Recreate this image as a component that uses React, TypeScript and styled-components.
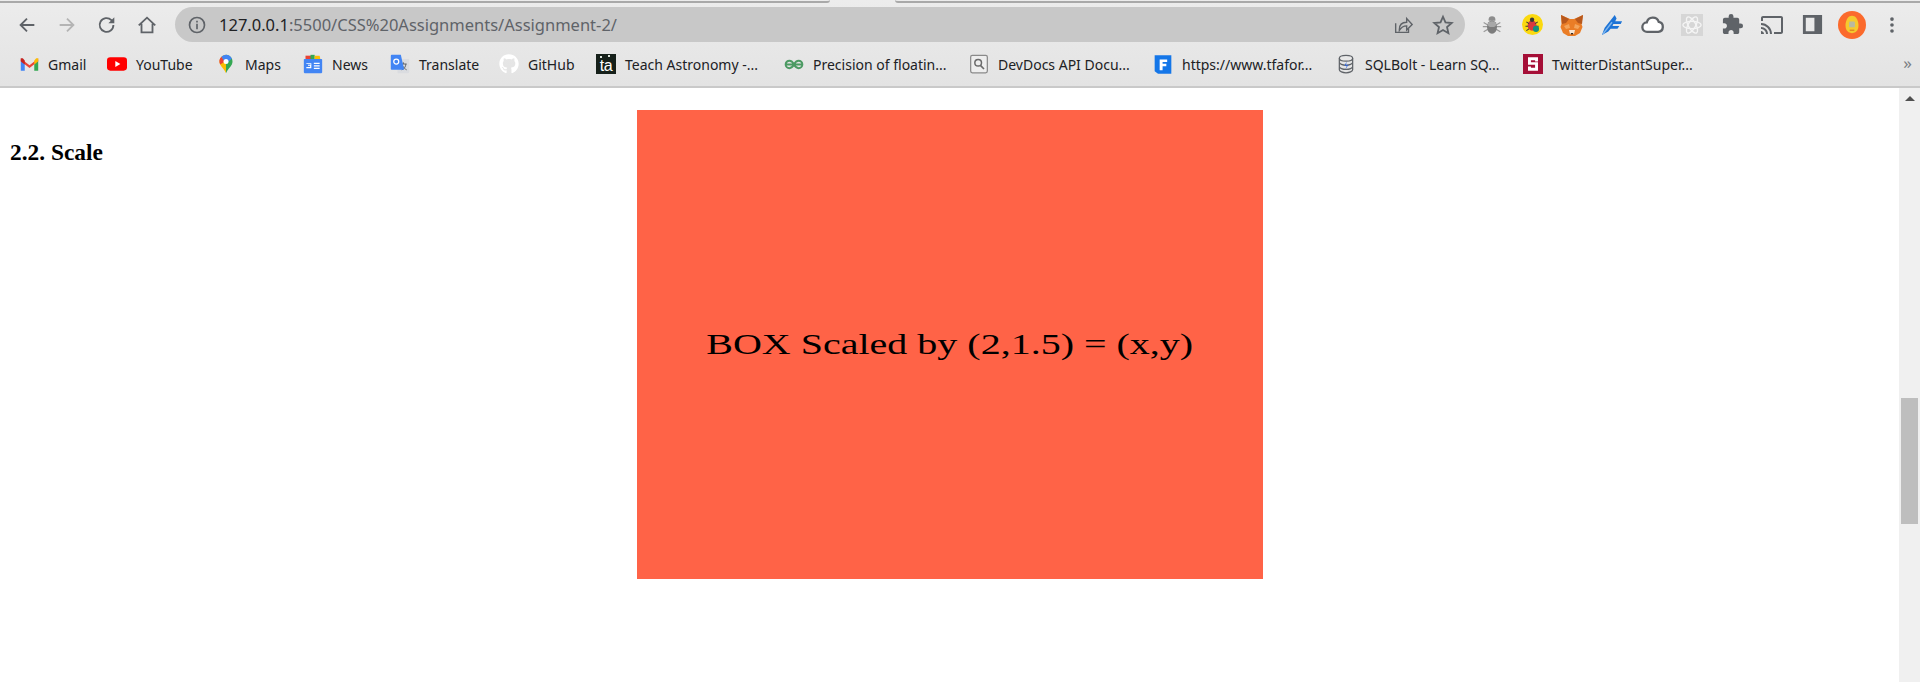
import { ReactNode } from 'react';
import styled, { createGlobalStyle } from 'styled-components';
import { MdExtension, MdCast } from 'react-icons/md';
import { FaGithub } from 'react-icons/fa';

const GlobalStyle = createGlobalStyle`
  html, body {
    margin: 0;
    height: 100%;
    overflow: hidden;
    background: #fff;
  }
  #root {
    height: 100%;
  }
`;

const Window = styled.div`
  display: flex;
  flex-direction: column;
  height: 682px;
  font-family: 'Noto Sans', 'Open Sans', sans-serif;
`;

const Chrome = styled.header`
  flex: none;
  height: 88px;
  box-sizing: border-box;
  background: linear-gradient(#ececec, #e3e3e3);
  border-bottom: 2px solid #c9c9c9;
`;

const TabEdge = styled.div`
  display: grid;
  grid-template-columns: 830px 1fr;
  column-gap: 65px;
  height: 3px;
`;

const TabLine = styled.div<{ $round: 'left' | 'right' }>`
  border-bottom: 2px solid #a9a9a9;
  height: 1px;
  border-radius: ${({ $round }) => ($round === 'right' ? '0 0 6px 0' : '0 0 0 6px')};
`;

const Toolbar = styled.div`
  display: flex;
  align-items: center;
  height: 35px;
  margin-top: 4px;
  padding-left: 7px;
`;

const NavButton = styled.div<{ $dim?: boolean }>`
  flex: none;
  width: 40px;
  height: 35px;
  display: flex;
  align-items: center;
  justify-content: center;
  color: ${({ $dim }) => ($dim ? '#b4b4b4' : '#5f6368')};
`;

const Omnibox = styled.div`
  flex: none;
  width: 1290px;
  height: 35px;
  margin-left: 8px;
  box-sizing: border-box;
  padding: 0 2px 0 12px;
  border-radius: 18px;
  background: #c8c8c8;
  display: flex;
  align-items: center;
  color: #5f6368;
`;

const Url = styled.span`
  margin-left: 12px;
  font-size: 16.5px;
  color: #5f6368;
  white-space: nowrap;
  flex: 1;
`;

const Host = styled.span`
  color: #202124;
`;

const OmniAction = styled.div`
  flex: none;
  width: 40px;
  display: flex;
  justify-content: center;
  color: #5f6368;
`;

const ExtensionTray = styled.div`
  display: flex;
  margin-left: 7px;
`;

const ExtensionButton = styled.div`
  flex: none;
  width: 40px;
  height: 35px;
  display: flex;
  align-items: center;
  justify-content: center;
  color: #5f6368;
`;

const BookmarkBar = styled.nav`
  display: flex;
  align-items: center;
  height: 42px;
  padding: 0 8px 0 19px;
  margin-top: 1px;
`;

const Bookmark = styled.div`
  flex: none;
  display: flex;
  align-items: center;
  gap: 9px;
  margin-right: 22px;
`;

const BookmarkIcon = styled.div`
  flex: none;
  width: 20px;
  height: 20px;
  display: flex;
  align-items: center;
  justify-content: center;
`;

const BookmarkLabel = styled.span<{ $width: number }>`
  width: ${({ $width }) => $width}px;
  font-size: 14px;
  color: #202124;
  white-space: nowrap;
`;

const Overflow = styled.span`
  margin-left: auto;
  font-size: 17px;
  color: #7a7d82;
  padding-bottom: 4px;
`;

const TeachLogo = styled.div`
  width: 20px;
  height: 20px;
  box-sizing: border-box;
  padding-top: 4px;
  background: radial-gradient(circle at 5px 3px, #dfe6df 1px, transparent 1.5px),
    radial-gradient(circle at 13px 2px, #dfe6df 1px, transparent 1.5px), #16201a;
  color: #fff;
  font: 16px/16px 'Liberation Sans', sans-serif;
  text-align: center;
  letter-spacing: -0.5px;
`;

const ViewportRow = styled.div`
  flex: 1;
  display: flex;
  min-height: 0;
`;

const Page = styled.main`
  flex: 1;
  display: grid;
  grid-template-columns: 1fr 626px 1fr;
  align-items: start;
  padding-top: 22px;
  font-family: 'Liberation Serif', 'Times New Roman', serif;
`;

const SectionTitle = styled.h3`
  margin: 29px 0 0 10px;
  font-size: 23.4px;
  line-height: 27px;
  font-weight: 700;
  color: #000;
`;

const ScaledBox = styled.div`
  width: 626px;
  height: 469px;
  background: #ff6347;
  display: flex;
  align-items: center;
  justify-content: center;
`;

const ScaledText = styled.span`
  font-size: 20px;
  color: #000;
  white-space: nowrap;
  transform: scale(2, 1.5);
`;

const Scrollbar = styled.aside`
  flex: none;
  width: 21px;
  background: #f0f0f0;
  display: flex;
  flex-direction: column;
  align-items: center;
`;

const ScrollArrow = styled.div`
  margin-top: 8px;
  width: 0;
  height: 0;
  border-left: 5px solid transparent;
  border-right: 5px solid transparent;
  border-bottom: 5px solid #505050;
`;

const ScrollThumb = styled.div`
  width: 17px;
  height: 126px;
  margin-top: 297px;
  background: #bebebe;
`;

const Svg = ({ size = 20, box = 24, children }: { size?: number; box?: number; children: ReactNode }) => (
  <svg width={size} height={size} viewBox={`0 0 ${box} ${box}`} fill="none">
    {children}
  </svg>
);

const line = { stroke: 'currentColor', strokeWidth: 2, strokeLinecap: 'butt' as const, fill: 'none' };

const bookmarks: { label: string; width: number; icon: ReactNode }[] = [
  {
    label: 'Gmail',
    width: 37,
    icon: (
      <Svg size={19}>
        <path d="M1 7v13h5V10z" fill="#4285f4" />
        <path d="M23 7v13h-5V10z" fill="#34a853" />
        <path d="M1 4.500 12 13l11-8.500V8l-11 8.500L1 8z" fill="#ea4335" />
        <path d="M1 4v4l5 4V7L3.500 4z" fill="#c5221f" />
        <path d="M23 4v4l-5 4V7l2.500-3z" fill="#fbbc04" />
      </Svg>
    ),
  },
  {
    label: 'YouTube',
    width: 58,
    icon: (
      <Svg>
        <rect x="0" y="4" width="24" height="16" rx="4" fill="#f00" />
        <path d="M10 8.500v7l6-3.500z" fill="#fff" />
      </Svg>
    ),
  },
  {
    label: 'Maps',
    width: 36,
    icon: (
      <Svg size={22}>
        <path d="M12 1a8 8 0 0 0-7 11.500c1.500 3.500 5.500 6 7 10.500z" fill="#fbbc04" />
        <path d="M12 1a8 8 0 0 1 7 11.500c-1.500 3.500-5.500 6-7 10.500z" fill="#34a853" />
        <path d="M6.500 3.300 11 9l-6 3.500a8 8 0 0 1 1.500-9.200z" fill="#ea4335" />
        <path d="M12 1a8 8 0 0 1 7 4.500l-7 6.500-5.500-8.700A8 8 0 0 1 12 1z" fill="#4285f4" />
        <circle cx="12" cy="9" r="3" fill="#fff" />
      </Svg>
    ),
  },
  {
    label: 'News',
    width: 36,
    icon: (
      <Svg>
        <path d="M3 2h9v5H3z" fill="#ea4335" />
        <path d="M9 1h5v6H9z" fill="#34a853" />
        <path d="M14 2h6l1 5h-7z" fill="#fbbc04" />
        <rect x="1" y="6" width="22" height="17" rx="1" fill="#4285f4" />
        <path d="M4 11h6v6H4v-1.500h4.500V14H6v-1.200h3V12H4zM13 10.500h7V12h-7zM13 13.500h7V15h-7zM13 16.500h7V18h-7z" fill="#fff" />
      </Svg>
    ),
  },
  {
    label: 'Translate',
    width: 58,
    icon: (
      <Svg>
        <rect x="9" y="6" width="14" height="17" rx="1" fill="#dadce0" />
        <path d="M13 12h7M16 10v2M14 19c3-1 5-4 5-7M15 14c1 2 3 4 5 5" stroke="#5f6368" strokeWidth="1.200" />
        <path d="M2 1h11l4 18H2a1 1 0 0 1-1-1V2a1 1 0 0 1 1-1z" fill="#4285f4" />
        <circle cx="7.500" cy="9" r="3" stroke="#fff" strokeWidth="1.500" />
      </Svg>
    ),
  },
  {
    label: 'GitHub',
    width: 46,
    icon: <FaGithub size={20} color="#fff" />,
  },
  {
    label: 'Teach Astronomy -...',
    width: 137,
    icon: <TeachLogo>ta</TeachLogo>,
  },
  {
    label: 'Precision of floatin...',
    width: 134,
    icon: (
      <Svg>
        <path
          d="M12 12.500c-1.500-3-3-4.500-5.500-4.500S2 10 2 12.500 4 17 6.500 17s4-1.500 5.500-4.500c1.500 3 3 4.500 5.500 4.500s4.500-2 4.500-4.500S20 8 17.500 8 13.500 9.500 12 12.500zM2 12.500h20"
          stroke="#4c9a63"
          strokeWidth="2.400"
        />
      </Svg>
    ),
  },
  {
    label: 'DevDocs API Docu...',
    width: 133,
    icon: (
      <Svg size={22}>
        <rect x="2" y="1.500" width="20" height="21" rx="2" fill="#eee" stroke="#8a8a8a" strokeWidth="1.500" />
        <circle cx="11" cy="10.500" r="4" stroke="#6a6a6a" strokeWidth="1.800" />
        <path d="m14 14 4 4" stroke="#6a6a6a" strokeWidth="2" />
      </Svg>
    ),
  },
  {
    label: 'https://www.tfafor...',
    width: 132,
    icon: (
      <Svg size={23}>
        <path d="M2 1h20v22H6l-4-3z" fill="#1476e8" />
        <path d="M8 6h9v3h-5.500v2H16v3h-4.500v5H8z" fill="#fff" />
      </Svg>
    ),
  },
  {
    label: 'SQLBolt - Learn SQ...',
    width: 136,
    icon: (
      <Svg size={22}>
        <ellipse cx="12" cy="5" rx="8" ry="3.500" fill="#e8e8e8" stroke="#5f6368" strokeWidth="1.500" />
        <path d="M4 5v14c0 2 4 3.500 8 3.500s8-1.500 8-3.500V5M4 10c0 2 4 3.500 8 3.500s8-1.500 8-3.500M4 15c0 2 4 3.500 8 3.500s8-1.500 8-3.500" stroke="#5f6368" strokeWidth="1.500" />
        <path d="m13 9-3 5h3l-2 5 4-6h-3z" fill="#3367d6" />
      </Svg>
    ),
  },
  {
    label: 'TwitterDistantSuper...',
    width: 141,
    icon: (
      <Svg>
        <rect x="0" y="0" width="24" height="24" fill="#a50f37" />
        <path d="M6 4h12v5h-3.500V7.500h-5V10H18v10H6v-5h3.500v1.500h5V13H6z" fill="#fff" />
      </Svg>
    ),
  },
];

export default function App() {
  return (
    <Window>
      <GlobalStyle />
      <Chrome>
        <TabEdge>
          <TabLine $round="right" />
          <TabLine $round="left" />
        </TabEdge>
        <Toolbar>
          <NavButton>
            <Svg size={22}>
              <path d="M20 12H5M12 5l-7 7 7 7" {...line} />
            </Svg>
          </NavButton>
          <NavButton $dim>
            <Svg size={22}>
              <path d="M4 12h15M12 5l7 7-7 7" {...line} />
            </Svg>
          </NavButton>
          <NavButton>
            <Svg size={22}>
              <path d="M19 12a7.500 7.500 0 1 1-2.200-5.300L19 9" {...line} />
              <path d="M20 3.500V10h-6.500z" fill="currentColor" />
            </Svg>
          </NavButton>
          <NavButton>
            <Svg size={22}>
              <path d="M3 12.500 12 4l9 8.500M6 10.500V20h12v-9.500" {...line} />
            </Svg>
          </NavButton>
          <Omnibox>
            <Svg size={20}>
              <circle cx="12" cy="12" r="9" {...line} />
              <path d="M12 10.500V17M12 7v2" {...line} />
            </Svg>
            <Url>
              <Host>127.0.0.1</Host>:5500/CSS%20Assignments/Assignment-2/
            </Url>
            <OmniAction>
              <Svg size={22}>
                <path d="M4 10v10h14v-4" stroke="currentColor" strokeWidth="1.500" />
                <path d="M8 17c0-5 3-8 8-8V5l6 6.500-6 6v-4.500c-3 0-6 1.500-8 5z" stroke="currentColor" strokeWidth="1.500" />
              </Svg>
            </OmniAction>
            <OmniAction>
              <Svg size={22}>
                <path d="m12 3 2.700 6.200 6.800.6-5.100 4.500 1.500 6.700-5.900-3.500L6.100 21l1.500-6.700-5.100-4.500 6.800-.6z" {...line} />
              </Svg>
            </OmniAction>
          </Omnibox>
          <ExtensionTray>
            <ExtensionButton>
              <Svg size={20}>
                <path d="M2 9l5 3M22 9l-5 3M1 14h6M23 14h-6M2 20l5-3M22 20l-5-3" stroke="#9a9a9a" strokeWidth="1.500" />
                <path d="M8 5a4 3.500 0 0 1 8 0v2H8z" fill="#8d8d8d" />
                <ellipse cx="12" cy="14.500" rx="6" ry="8" fill="#7c7c7c" />
                <ellipse cx="12" cy="11" rx="5" ry="3.500" fill="#a8a8a8" />
              </Svg>
            </ExtensionButton>
            <ExtensionButton>
              <Svg size={21}>
                <circle cx="12" cy="12" r="12" fill="#fbd90f" />
                <ellipse cx="11.500" cy="13" rx="5" ry="6" fill="#d83a3f" />
                <circle cx="11.500" cy="6.500" r="2.500" fill="#3a3a3a" />
                <path d="M5 9l3 2M18 9l-3 2M4 14h3M19 14h-3M5 19l3-2" stroke="#3a3a3a" strokeWidth="1.200" />
                <circle cx="16" cy="17" r="3.500" fill="#14917d" />
              </Svg>
            </ExtensionButton>
            <ExtensionButton>
              <Svg size={24}>
                <path d="M1 2 10 6h4l9-4-1.500 9 1 3-2.500 6-5 3h-7l-5-3-2.500-6 1-3z" fill="#ea7d26" />
                <path d="M1 2l8 4-3 4-4 1zM23 2l-8 4 3 4 4 1z" fill="#b8581c" />
                <path d="M4 13l5-2 1 4-4 1zM20 13l-5-2-1 4 4 1z" fill="#f4a45a" />
                <path d="M9 17h6l-1 4h-4z" fill="#f6e3d0" />
                <path d="M10.500 20h3l-1.500 2z" fill="#33241a" />
              </Svg>
            </ExtensionButton>
            <ExtensionButton>
              <Svg size={22}>
                <path d="M1 23 4 15 15 1l2 4-1.500 3H23l-1.500 3h-8l-1 2H20l-2 3h-7.500L8 19z" fill="#1e74d6" />
                <path d="M2 22 12 9" stroke="#7eb6ee" strokeWidth="1.500" />
              </Svg>
            </ExtensionButton>
            <ExtensionButton>
              <Svg size={25}>
                <path d="M7 19a4.500 4.500 0 0 1-.5-9A6 6 0 0 1 18 9.500a4.800 4.800 0 0 1-.5 9.500z" fill="#fff" stroke="#5f6368" strokeWidth="2.200" />
              </Svg>
            </ExtensionButton>
            <ExtensionButton>
              <Svg size={22}>
                <rect width="24" height="24" fill="#d6d6d6" />
                <g stroke="#f4f4f4" strokeWidth="1.500">
                  <ellipse cx="12" cy="12" rx="10" ry="4" />
                  <ellipse cx="12" cy="12" rx="10" ry="4" transform="rotate(60 12 12)" />
                  <ellipse cx="12" cy="12" rx="10" ry="4" transform="rotate(120 12 12)" />
                </g>
              </Svg>
            </ExtensionButton>
            <ExtensionButton>
              <MdExtension size={23} />
            </ExtensionButton>
            <ExtensionButton>
              <MdCast size={24} />
            </ExtensionButton>
            <ExtensionButton>
              <Svg size={23}>
                <path d="M3.500 3.500h17v17h-17z" stroke="currentColor" strokeWidth="3" />
                <path d="M14 3h7v18h-7z" fill="currentColor" />
              </Svg>
            </ExtensionButton>
            <ExtensionButton>
              <Svg size={28}>
                <circle cx="12" cy="12" r="12" fill="#fb6a2c" />
                <path d="M12 4c3 0 5 3 5.500 7 .4 4-1 8-5.500 8s-5.900-4-5.500-8C7 7 9 4 12 4z" fill="#f5c92e" />
                <rect x="9.500" y="9" width="5" height="5" rx="1" fill="#b9b9a0" />
                <path d="M10 16.500h4" stroke="#e08a1e" strokeWidth="1.200" />
              </Svg>
            </ExtensionButton>
            <ExtensionButton>
              <Svg size={22}>
                <circle cx="12" cy="5.500" r="2" fill="currentColor" />
                <circle cx="12" cy="12" r="2" fill="currentColor" />
                <circle cx="12" cy="18.500" r="2" fill="currentColor" />
              </Svg>
            </ExtensionButton>
          </ExtensionTray>
        </Toolbar>
        <BookmarkBar>
          {bookmarks.map((b) => (
            <Bookmark key={b.label}>
              <BookmarkIcon>{b.icon}</BookmarkIcon>
              <BookmarkLabel $width={b.width}>{b.label}</BookmarkLabel>
            </Bookmark>
          ))}
          <Overflow>»</Overflow>
        </BookmarkBar>
      </Chrome>
      <ViewportRow>
        <Page>
          <SectionTitle>2.2. Scale</SectionTitle>
          <ScaledBox>
            <ScaledText>BOX Scaled by (2,1.5) = (x,y)</ScaledText>
          </ScaledBox>
        </Page>
        <Scrollbar>
          <ScrollArrow />
          <ScrollThumb />
        </Scrollbar>
      </ViewportRow>
    </Window>
  );
}
